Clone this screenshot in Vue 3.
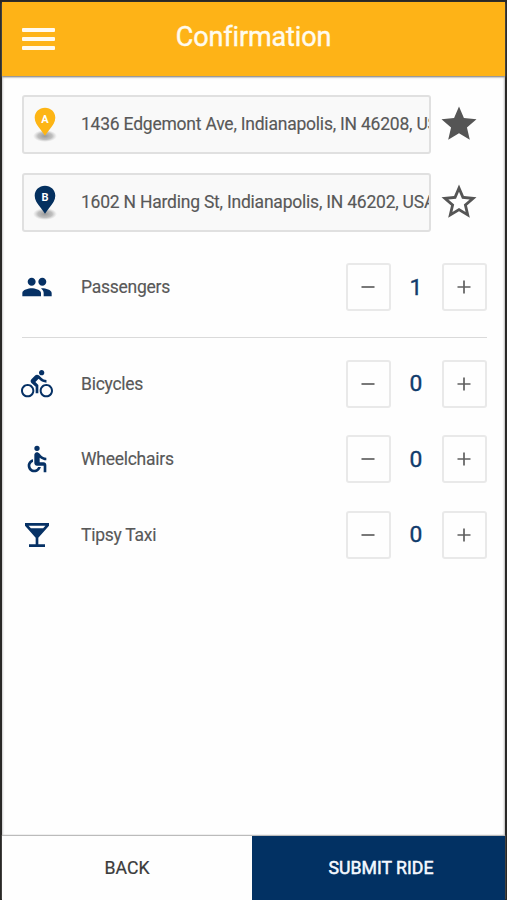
<script setup>
import { ref } from 'vue'

const stops = ref([
  { id: 'A', address: '1436 Edgemont Ave, Indianapolis, IN 46208, USA', saved: true },
  { id: 'B', address: '1602 N Harding St, Indianapolis, IN 46202, USA', saved: false },
])

const starFull = 'M12 17.27L18.18 21l-1.64-7.03L22 9.24l-7.19-.61L12 2 9.19 8.63 2 9.24l5.46 4.73L5.82 21z'
const starOutline = 'M22 9.24l-7.19-.62L12 2 9.19 8.63 2 9.24l5.46 4.73L5.82 21 12 17.27 18.18 21l-1.63-7.03L22 9.24zM12 15.4l-3.76 2.27 1-4.28-3.32-2.88 4.38-.38L12 6.1l1.71 4.04 4.38.38-3.32 2.88 1 4.28L12 15.4z'

const options = ref([
  {
    name: 'Passengers',
    count: 1,
    icon: 'M16 11c1.66 0 2.99-1.34 2.99-3S17.66 5 16 5c-1.66 0-3 1.34-3 3s1.34 3 3 3zm-8 0c1.66 0 2.99-1.34 2.99-3S9.66 5 8 5C6.34 5 5 6.34 5 8s1.34 3 3 3zm0 2c-2.33 0-7 1.17-7 3.5V19h14v-2.5c0-2.33-4.67-3.5-7-3.5zm8 0c-.29 0-.62.02-.97.05 1.16.84 1.97 1.97 1.97 3.45V19h6v-2.5c0-2.33-4.67-3.5-7-3.5z',
  },
  {
    name: 'Bicycles',
    count: 0,
    icon: 'M15.5 5.5c1.1 0 2-.9 2-2s-.9-2-2-2-2 .9-2 2 .9 2 2 2zM5 12c-2.8 0-5 2.2-5 5s2.2 5 5 5 5-2.2 5-5-2.2-5-5-5zm0 8.5c-1.9 0-3.5-1.6-3.5-3.5s1.6-3.5 3.5-3.5 3.5 1.6 3.5 3.5-1.6 3.5-3.5 3.5zm5.8-10l2.4-2.4.8.8c1.3 1.3 3 2.1 5.1 2.1V9c-1.5 0-2.7-.6-3.6-1.5l-1.9-1.9c-.5-.4-1-.6-1.6-.6s-1.1.2-1.4.6L7.8 8.4c-.4.4-.6.9-.6 1.4 0 .6.2 1.1.6 1.4L11 14v5h2v-6.2l-2.2-2.3zM19 12c-2.8 0-5 2.2-5 5s2.2 5 5 5 5-2.2 5-5-2.2-5-5-5zm0 8.5c-1.9 0-3.5-1.6-3.5-3.5s1.6-3.5 3.5-3.5 3.5 1.6 3.5 3.5-1.6 3.5-3.5 3.5z',
  },
  {
    name: 'Wheelchairs',
    count: 0,
    icon: 'M12 2a2 2 0 1 0 0 4 2 2 0 0 0 0-4zM19 13v-2c-1.54.02-3.09-.75-4.07-1.83l-1.29-1.43c-.17-.19-.38-.34-.61-.45-.01 0-.01-.01-.02-.01H13c-.35-.2-.75-.3-1.19-.26C10.76 7.11 10 8.04 10 9.09V15c0 1.1.9 2 2 2h5v5h2v-5.5c0-1.1-.9-2-2-2h-3v-3.45c1.29 1.07 3.25 1.94 5 1.95zm-6.17 5c-.41 1.16-1.52 2-2.83 2-1.66 0-3-1.34-3-3 0-1.31.84-2.41 2-2.83V12.1c-2.28.46-4 2.48-4 4.9 0 2.76 2.24 5 5 5 2.42 0 4.44-1.72 4.9-4h-2.07z',
  },
  {
    name: 'Tipsy Taxi',
    count: 0,
    icon: 'M21 5V3H3v2l8 9v5H6v2h12v-2h-5v-5l8-9zM7.43 7L5.66 5h12.69l-1.78 2H7.43z',
  },
])
</script>

<template>
  <div class="screen">
    <header class="bar">
      <button class="menu" aria-label="Menu">
        <span></span><span></span><span></span>
      </button>
      <h1>Confirmation</h1>
    </header>

    <main>
      <div v-for="stop in stops" :key="stop.id" class="stop">
        <div class="field">
          <svg class="pin" :class="'pin-' + stop.id.toLowerCase()" viewBox="0 0 24 36">
            <defs>
              <radialGradient :id="'shade' + stop.id">
                <stop offset="0" stop-color="#888" stop-opacity="0.85" />
                <stop offset="0.6" stop-color="#a0a0a0" stop-opacity="0.65" />
                <stop offset="1" stop-color="#bbb" stop-opacity="0" />
              </radialGradient>
            </defs>
            <ellipse cx="12" cy="29" rx="12" ry="6" :fill="`url(#shade${stop.id})`" />
            <path d="M12 .8C6.2.8 1.7 5.1 1.7 10.7c0 4.2 2.4 7.3 5 10.7 2 2.6 3.8 4.9 5.3 7.4 1.5-2.5 3.3-4.8 5.3-7.4 2.6-3.4 5-6.5 5-10.7C22.3 5.1 17.8.8 12 .8z" />
            <text x="12" y="16" text-anchor="middle">{{ stop.id }}</text>
          </svg>
          <span class="address">{{ stop.address }}</span>
        </div>
        <button class="star" aria-label="Favorite" @click="stop.saved = !stop.saved">
          <svg viewBox="0 0 24 24"><path :d="stop.saved ? starFull : starOutline" /></svg>
        </button>
      </div>

      <div class="options">
        <div v-for="option in options" :key="option.name" class="option">
          <svg class="icon" viewBox="0 0 24 24"><path :d="option.icon" /></svg>
          <span class="label">{{ option.name }}</span>
          <button class="step" aria-label="Less" @click="option.count = Math.max(0, option.count - 1)">
            <svg viewBox="0 0 14 14"><path d="M.5 7h13" /></svg>
          </button>
          <span class="count">{{ option.count }}</span>
          <button class="step" aria-label="More" @click="option.count++">
            <svg viewBox="0 0 14 14"><path d="M.5 7h13M7 .5v13" /></svg>
          </button>
        </div>
      </div>
    </main>

    <footer>
      <button class="back">BACK</button>
      <button class="submit">SUBMIT RIDE</button>
    </footer>
  </div>
</template>

<style>
body {
  margin: 0;
  overflow: hidden;
}
</style>

<style scoped>
.screen {
  box-sizing: border-box;
  height: 900px;
  display: flex;
  flex-direction: column;
  border: 2px solid #292826;
  border-bottom: 0;
  background: #fefefe;
  font-family: Roboto, sans-serif;
  color: #585858;
}
button {
  font: inherit;
  margin: 0;
  padding: 0;
  border: 0;
  background: none;
}
svg {
  display: block;
}
.bar {
  display: grid;
  grid-template-columns: 90px 1fr 90px;
  align-items: center;
  height: 74px;
  flex: none;
  background: #feb317;
  box-shadow: 0 1px 2px #777;
  z-index: 1;
}
.menu {
  display: flex;
  flex-direction: column;
  gap: 5px;
  width: 33px;
  margin-left: 20px;
}
.menu span {
  height: 4px;
  border-radius: 1px;
  background: #fffaf0;
}
h1 {
  margin: 0 0 4px;
  text-align: center;
  font-size: 27px;
  letter-spacing: -0.12px;
  line-height: 32px;
  font-weight: 400;
  color: #fffbee;
  -webkit-text-stroke: 0.4px #fffbee;
}
main {
  flex: 1;
  padding: 19px 18.5px 0 19.5px;
  display: flex;
  flex-direction: column;
  box-shadow: inset 1px 0 2px #ccc, inset -1px 0 2px #bbb;
}
.stop {
  display: flex;
  align-items: center;
  height: 58.5px;
  margin-bottom: 19.5px;
}
.field {
  box-sizing: border-box;
  display: flex;
  align-items: center;
  width: 409.5px;
  height: 58.5px;
  border: 2px solid #e0e0e0;
  border-radius: 3px;
  background: #f9f9f9;
  overflow: hidden;
}
.pin {
  flex: none;
  width: 24px;
  height: 36px;
  margin: 1px 24.5px 0 9px;
}
.pin-a path {
  fill: #fdb515;
}
.pin-b path {
  fill: #04305f;
}
.pin text {
  fill: #fff;
  font-size: 11px;
  font-weight: 700;
}
.address {
  white-space: nowrap;
  font-size: 17.5px;
  letter-spacing: -0.22px;
  -webkit-text-stroke: 0.15px #585858;
}
.star {
  width: 42px;
  height: 42px;
  margin-left: 6.5px;
}
.star svg {
  width: 42px;
  height: 42px;
  fill: #555;
}
.option {
  display: flex;
  align-items: center;
  height: 75.5px;
}
.option:first-child {
  height: 72px;
  padding-bottom: 13.5px;
  border-bottom: 1px solid #dadada;
  margin-bottom: 8.3px;
}
.icon {
  width: 32px;
  height: 32px;
  margin-left: -0.5px;
  fill: #063165;
}
.label {
  flex: 1;
  margin-left: 28px;
  font-size: 17.5px;
  letter-spacing: -0.26px;
  -webkit-text-stroke: 0.15px #585858;
}
.step {
  box-sizing: border-box;
  display: grid;
  place-items: center;
  width: 45px;
  height: 48px;
  border: 2px solid #e9e9e9;
  border-radius: 3px;
}
.step svg {
  width: 14px;
  height: 14px;
  stroke: #606060;
  stroke-width: 1.7;
  fill: none;
}
.count {
  width: 51px;
  text-align: center;
  font-size: 22.8px;
  color: #103b6b;
  -webkit-text-stroke: 0.4px #103b6b;
}
footer {
  display: flex;
  flex: none;
  height: 64px;
  box-shadow: 0 -1px 1px #bbb;
  font-size: 17.7px;
  letter-spacing: -0.36px;
}
.back {
  width: 250px;
  color: #3b3b3b;
  background: #fefefe;
  -webkit-text-stroke: 0.2px #3b3b3b;
}
.submit {
  flex: 1;
  padding-left: 5px;
  color: #f5f9ff;
  background: #023163;
  -webkit-text-stroke: 0.5px #f5f9ff;
}
</style>
